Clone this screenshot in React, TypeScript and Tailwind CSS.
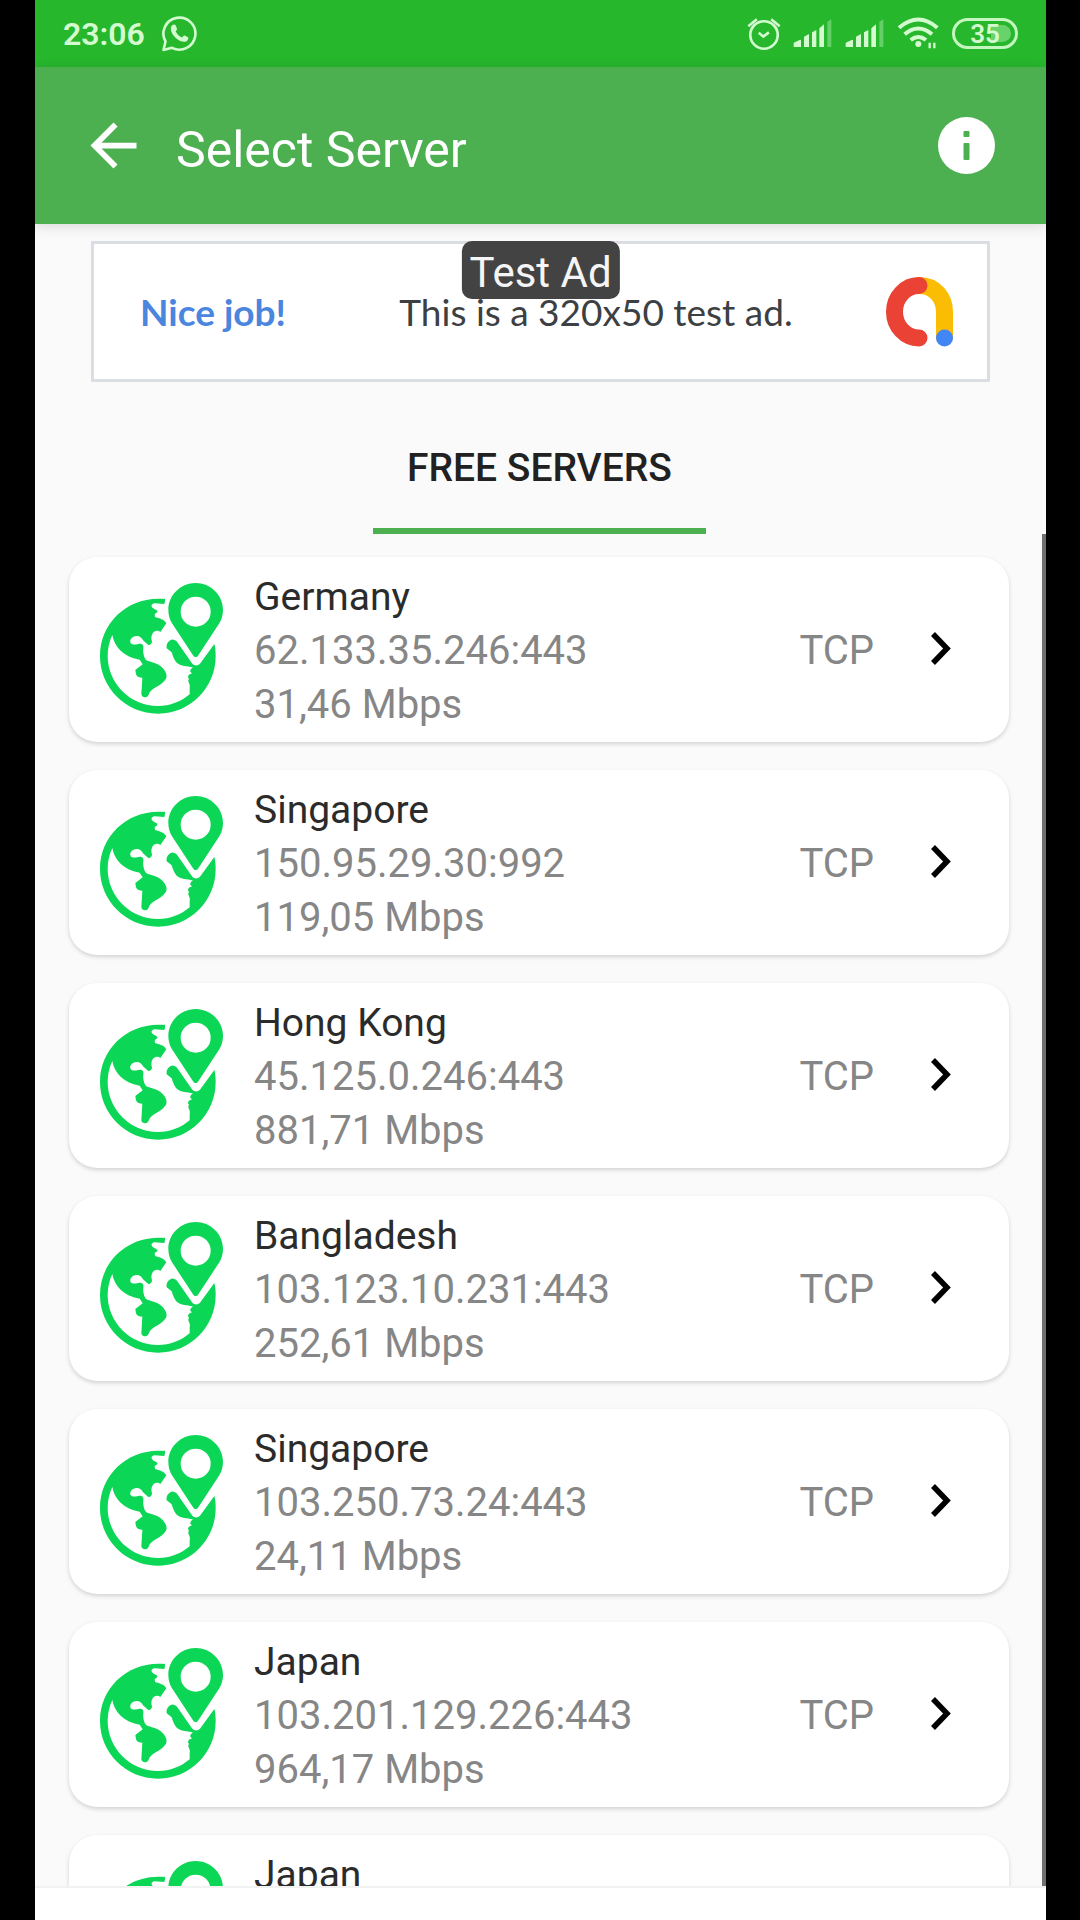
import { MdArrowBack } from "react-icons/md";

interface Server {
    country: string;
    address: string;
    speed: string;
}

const servers: Server[] = [
    { country: "Germany", address: "62.133.35.246:443", speed: "31,46 Mbps" },
    { country: "Singapore", address: "150.95.29.30:992", speed: "119,05 Mbps" },
    { country: "Hong Kong", address: "45.125.0.246:443", speed: "881,71 Mbps" },
    { country: "Bangladesh", address: "103.123.10.231:443", speed: "252,61 Mbps" },
    { country: "Singapore", address: "103.250.73.24:443", speed: "24,11 Mbps" },
    { country: "Japan", address: "103.201.129.226:443", speed: "964,17 Mbps" },
    { country: "Japan", address: "103.201.129.226:443", speed: "964,17 Mbps" },
];

function App() {
    return (
        <div className="h-screen bg-black pr-[34px] pl-[35px] font-['Roboto',sans-serif]">
            <div className="flex h-full flex-col overflow-hidden bg-[#fafafa]">
                <StatusBar />
                <Header />
                <main className="flex min-h-0 flex-1 flex-col">
                    <AdBanner />
                    <div role="tablist" className="mt-[26px] flex shrink-0 justify-center pr-0.5">
                        <button
                            role="tab"
                            aria-selected="true"
                            className="h-[126px] w-[333px] border-b-6 border-[#4caf50] text-[39px] font-medium text-[#212121]"
                        >
                            FREE SERVERS
                        </button>
                    </div>
                    <div className="relative min-h-0 flex-1 overflow-hidden">
                        <ul className="flex flex-col gap-7 pt-[23px] pr-[37px] pl-[34px]">
                            {servers.map((server, i) => (
                                <ServerCard key={i} {...server} />
                            ))}
                        </ul>
                        <div className="absolute inset-y-0 right-0 w-1 bg-[#707070]" />
                    </div>
                </main>
                <div className="h-[34px] shrink-0 border-t-2 border-[#f2f2f2] bg-white" />
            </div>
        </div>
    );
}

const StatusBar = () => {
    return (
        <div className="flex h-[67px] shrink-0 items-center justify-between bg-[#27b72d] px-7 text-[#d4fbd0]">
            <div className="flex items-center gap-4">
                <span className="text-[32px] font-semibold">23:06</span>
                <WhatsappIcon />
            </div>
            <div className="flex items-center gap-3">
                <AlarmIcon />
                <SignalIcon />
                <SignalIcon />
                <WifiIcon />
                <div className="relative flex h-[31px] w-[66px] items-center justify-center overflow-hidden rounded-full border-3 border-[#c4f7c0]">
                    <div className="absolute inset-y-1 right-1 w-5 rounded-r-full bg-[#67d36a]" />
                    <span className="relative text-[26px] leading-6 font-semibold">35</span>
                </div>
            </div>
        </div>
    );
};

const Header = () => {
    return (
        <header className="z-10 flex h-[157px] shrink-0 items-center bg-[#4caf50] pr-[51px] pl-11 text-white shadow-[0_2px_12px_rgba(0,0,0,0.14)]">
            <button aria-label="Back">
                <MdArrowBack size={69} />
            </button>
            <h1 className="ml-7 pt-2 text-[50px] leading-[60px]">Select Server</h1>
            <button aria-label="Info" className="ml-auto">
                <svg width="57" height="57" viewBox="0 0 57 57">
                    <circle cx="28.5" cy="28.5" r="28.5" fill="#fff" />
                    <rect x="25.5" y="14" width="6" height="6" rx="1" fill="#4caf50" />
                    <rect x="25.5" y="26" width="6" height="17" rx="1" fill="#4caf50" />
                </svg>
            </button>
        </header>
    );
};

const AdBanner = () => {
    return (
        <a
            href="#"
            className="relative mx-14 mt-[17px] flex h-[141px] shrink-0 items-center justify-between border-3 border-[#dadde1] bg-white pr-[34px] pl-[46px] font-['Lato',sans-serif] text-[37px]"
        >
            <span className="font-bold text-[#4a86dd]">Nice job!</span>
            <span className="pl-5 text-[#3c4043]">This is a 320x50 test ad.</span>
            <AdmobLogo />
            <span className="absolute -top-[3px] left-1/2 flex h-[58px] -translate-x-1/2 items-center rounded-[10px] bg-[#434343] px-2 pt-1 font-['Roboto',sans-serif] text-[42px] whitespace-nowrap text-[#f5f5f5]">
                Test Ad
            </span>
        </a>
    );
};

const ServerCard = ({ country, address, speed }: Server) => {
    return (
        <li>
            <button className="flex w-full items-center rounded-[28px] bg-white pt-[13px] pr-14 pb-[10px] pl-[30px] text-left text-[40px] leading-[54px] text-[#868686] shadow-[0_2px_4px_rgba(0,0,0,0.16)]">
                <GlobeIcon />
                <span className="ml-[30px] flex flex-col">
                    <span className="text-[39px] text-[#2b2b2b]">{country}</span>
                    <span>{address}</span>
                    <span>{speed}</span>
                </span>
                <span className="mr-14 ml-auto">TCP</span>
                <svg width="23" height="38" viewBox="0 0 23 38" fill="none" stroke="#000" strokeWidth="5.5">
                    <path d="M3 2 17 16.500 3 31" />
                </svg>
            </button>
        </li>
    );
};

const GlobeIcon = () => {
    return (
        <svg width="125" height="139" viewBox="40 35 375 417" fill="#0bd655" className="shrink-0">
            <path d="M236 86C130 76 43 155 43 257c0 96 78 173 174 173s173-77 173-173c0-13-1-25-4-36l-42 58c-6 8-17 8-24 1l-46-66c-6-5-13-9-20-4-9 5-13 14-11 24l15 12c4 14 9 25 16 32 13 10 29 9 48 13-9 7-12 14-2 18-12 3-16 9-10 17-7 8 6 15 2 26v20c-26 22-59 35-95 35-83 0-151-68-151-150 0-23 5-44 14-63 6 34 31 65 82 74l9 14-22 17 2 13c3 8 11 10 19 10l-3 50c2 11 17 12 22 1 6-22 34-22 52-48 5-10-1-22-10-32-12-13-28-16-44-21-10-5-12-13-14-25-2-13 4-21-5-26-10-4-17 5-30 0-7-4-5-16 4-21 13-7 25-2 30 10l15 13c7 3 12-3 12-10-4-12-1-23 6-29 8-5 14-3 19 1l18-26c-7-13-20-14-34-19l-1-9c9-4 13-9 0-14-13-7-12-16 0-18l29 2c2-6 3-12 1-18z" />
            <path
                fillRule="evenodd"
                d="M330 38c-45 0-82 36-82 81 0 14 4 28 11 40l64 97c3 5 11 5 14 0l64-97c7-12 11-26 11-40 0-45-37-81-82-81zm0 41a45 45 0 1 1 0 90 45 45 0 0 1 0-90z"
            />
        </svg>
    );
};

const AdmobLogo = () => {
    return (
        <svg width="67" height="70" viewBox="0 0 67 70" fill="none" strokeWidth="17" strokeLinecap="round">
            <path d="M33 8.500C49 8.500 58.500 21 58.500 35V60" stroke="#fbbc04" />
            <path d="M33 8.500A24.500 26.250 0 0 0 33 61" stroke="#ea4335" />
            <circle cx="58.500" cy="61" r="8.500" fill="#4285f4" />
        </svg>
    );
};

const WhatsappIcon = () => {
    return (
        <svg width="36" height="38" viewBox="0 0 36 38" fill="none" stroke="currentColor" strokeWidth="2.600">
            <path d="M2.500 35 4.500 26.500A16 16 0 1 1 11 32.800Z" strokeLinejoin="round" />
            <path
                d="M11 10.500c1.500-1.500 3-1.500 3.700 0l1.300 3.200c.3.800-.9 2-1.300 2.700 1.500 3 3.500 4.700 6.300 6 .9-.5 1.700-2.200 2.700-1.800l3.300 1.700c.9.700 0 3-1.400 3.900-3 1.700-7.500-.2-10.800-3.200-4-3.700-6.600-9.500-3.800-12.500z"
                fill="currentColor"
                stroke="none"
            />
        </svg>
    );
};

const AlarmIcon = () => {
    return (
        <svg width="34" height="34" viewBox="46 50 104 104" fill="none" stroke="currentColor" strokeWidth="8">
            <circle cx="98" cy="105" r="42" />
            <path d="M82 98 96 110 113 97M50 78 76 57M146 78 120 57" />
        </svg>
    );
};

const SignalIcon = () => {
    return (
        <svg width="39" height="30" viewBox="186 58 117 90" fill="currentColor" className="mr-px">
            <path d="M188 142v-12c6-4 14-8 22-10v22zM219 111l15-8v39h-15zM243 98l13-7v51h-13zM265 86l14-12v68h-14z" />
            <path d="M289 66l12-7v83h-12z" opacity="0.35" />
        </svg>
    );
};

const WifiIcon = () => {
    return (
        <svg width="42" height="33" viewBox="502 55 126 99" fill="none" stroke="currentColor" strokeWidth="12" className="mr-px">
            <path d="M508 87Q566 38 623 87M525 107Q566 72 607 107M543 124Q566 106 589 124" />
            <circle cx="566" cy="136" r="9" fill="currentColor" stroke="none" />
            <path d="M600 132v17M614 132v17" strokeWidth="7" />
        </svg>
    );
};

export default App;
